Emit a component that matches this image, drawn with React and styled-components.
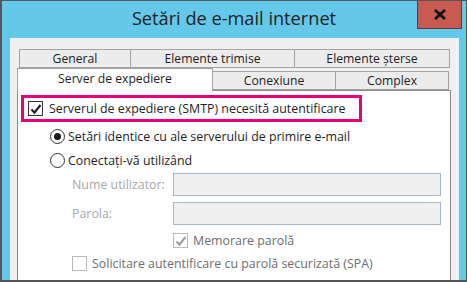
import React from 'react';
import styled, { createGlobalStyle } from 'styled-components';

const GlobalStyle = createGlobalStyle`
  html, body {
    margin: 0;
    padding: 0;
    width: 467px;
    height: 282px;
    overflow: hidden;
  }
  body {
    font-family: 'Open Sans', 'Noto Sans', sans-serif;
    color: #1e1e1e;
  }
`;

const Window = styled.div`
  width: 467px;
  height: 282px;
  box-sizing: border-box;
  background: #64c8ea;
  border: 1px solid #565656;
  border-left-width: 2px;
  border-bottom-width: 2px;
  display: flex;
  flex-direction: column;
  overflow: hidden;
`;

const TitleBar = styled.div`
  height: 37px;
  position: relative;
  display: flex;
  justify-content: center;
  align-items: center;
`;

const Title = styled.h1`
  margin: 0 0 3px 0;
  font-size: 18.2px;
  font-weight: 400;
  color: #222;
`;

// butonul de inchidere sta peste bara de titlu
const CloseButton = styled.button`
  position: absolute;
  top: -1px;
  right: 4px;
  width: 45px;
  height: 29px;
  box-sizing: border-box;
  padding: 0;
  border: 1px solid #5c3b38;
  border-top: none;
  background: #c75b52;
  display: flex;
  justify-content: center;
  align-items: center;
`;

const Body = styled.div`
  flex: 1;
  margin: 0 7px 0 8px;
  padding: 11px 7px 0 7px;
  background: #f0f0f0;
  display: flex;
  flex-direction: column;
`;

const TabRow = styled.div`
  display: flex;
  align-items: flex-end;
  padding: ${(p) => p.pad || '0'};
`;

const Tab = styled.div`
  width: ${(p) => p.w}px;
  height: ${(p) => (p.active ? 23 : 19)}px;
  box-sizing: border-box;
  border: 1px solid #a3a3a3;
  border-left: ${(p) => (p.first ? '1px solid #a3a3a3' : 'none')};
  border-bottom: ${(p) => (p.active ? 'none' : '1px solid #a3a3a3')};
  background: ${(p) => (p.active ? '#ffffff' : '#ececec')};
  font-size: 12.2px;
  white-space: nowrap;
  display: flex;
  justify-content: center;
  align-items: center;
  padding-bottom: ${(p) => (p.active ? 4 : 1)}px;
  margin-bottom: ${(p) => (p.active ? '-1px' : '0')};
  position: relative;
  z-index: ${(p) => (p.active ? 2 : 1)};
`;

const Panel = styled.div`
  flex: 1;
  width: 434px;
  box-sizing: border-box;
  background: #fff;
  border: 1px solid #8a8a8a;
  border-bottom: none;
  padding: 4px 0 0 3px;
  display: flex;
  flex-direction: column;
`;

const Highlight = styled.div`
  width: 341px;
  height: 27px;
  box-sizing: border-box;
  border: 3px solid #e6007e;
  display: flex;
  align-items: center;
  padding-left: 4px;
  gap: 6px;
`;

const Box = styled.span`
  width: 15px;
  height: 15px;
  box-sizing: border-box;
  border: 1px solid ${(p) => (p.disabled ? '#b9b9b9' : '#333')};
  background: #fff;
  display: inline-flex;
  justify-content: center;
  align-items: center;
  flex-shrink: 0;
`;

const Radio = styled.span`
  width: 15px;
  height: 15px;
  box-sizing: border-box;
  border-radius: 50%;
  border: 1px solid #333;
  background: #fff;
  display: inline-flex;
  justify-content: center;
  align-items: center;
  flex-shrink: 0;

  &::after {
    content: '';
    width: 7px;
    height: 7px;
    border-radius: 50%;
    background: ${(p) => (p.checked ? '#1a1a1a' : 'transparent')};
  }
`;

const Option = styled.div`
  display: flex;
  align-items: center;
  gap: ${(p) => p.gap || 3}px;
  height: ${(p) => p.h || 24}px;
  margin-left: ${(p) => p.indent || 0}px;
  font-size: 12.4px;
  white-space: nowrap;
  color: ${(p) => p.color || '#1e1e1e'};
`;

const Field = styled.div`
  display: flex;
  align-items: center;
  margin-left: 51px;
  height: 23px;
  margin-bottom: ${(p) => p.mb || 0}px;
`;

const FieldLabel = styled.label`
  width: 101px;
  font-size: 12.4px;
  color: #a7a7a7;
`;

const Input = styled.div`
  width: 268px;
  height: 23px;
  box-sizing: border-box;
  border: 1px solid #a6b6c8;
  background: #f0f0f0;
`;

const Check = ({ color }) => (
  <svg width="12" height="12" viewBox="0 0 12 12">
    <path d="M1.5 6.5 L4.5 9.5 L10.5 2" fill="none" stroke={color} strokeWidth="2.2" />
  </svg>
);

export default function App() {
  return (
    <>
      <GlobalStyle />
      <Window>
        <TitleBar>
          <Title>Setări de e-mail internet</Title>
          <CloseButton aria-label="Închide">
            <svg width="14" height="11" viewBox="0 0 14 11">
              <path d="M2 1 L12 10 M12 1 L2 10" stroke="#111" strokeWidth="2.8" />
            </svg>
          </CloseButton>
        </TitleBar>
        <Body>
          <TabRow pad="0 0 0 2px">
            <Tab w={112} first>General</Tab>
            <Tab w={164}>Elemente trimise</Tab>
            <Tab w={155}>Elemente șterse</Tab>
          </TabRow>
          <TabRow>
            <Tab w={196} first active>Server de expediere</Tab>
            <Tab w={123}>Conexiune</Tab>
            <Tab w={113}>Complex</Tab>
          </TabRow>
          <Panel>
            <Highlight>
              <Box>
                <Check color="#222" />
              </Box>
              <Option h={21}>Serverul de expediere (SMTP) necesită autentificare</Option>
            </Highlight>
            <Option indent={29} h={24} style={{ marginTop: 2 }}>
              <Radio checked />
              Setări identice cu ale serverului de primire e-mail
            </Option>
            <Option indent={29} h={24}>
              <Radio />
              Conectați-vă utilizând
            </Option>
            <Field mb={6} style={{ marginTop: 1 }}>
              <FieldLabel>Nume utilizator:</FieldLabel>
              <Input />
            </Field>
            <Field>
              <FieldLabel>Parola:</FieldLabel>
              <Input />
            </Field>
            <Option indent={152} h={21} gap={5} color="#6d6d6d" style={{ marginTop: 5 }}>
              <Box disabled>
                <Check color="#a0a0a0" />
              </Box>
              Memorare parolă
            </Option>
            <Option indent={51} h={24} gap={5} color="#6d6d6d">
              <Box disabled />
              Solicitare autentificare cu parolă securizată (SPA)
            </Option>
          </Panel>
        </Body>
      </Window>
    </>
  );
}
